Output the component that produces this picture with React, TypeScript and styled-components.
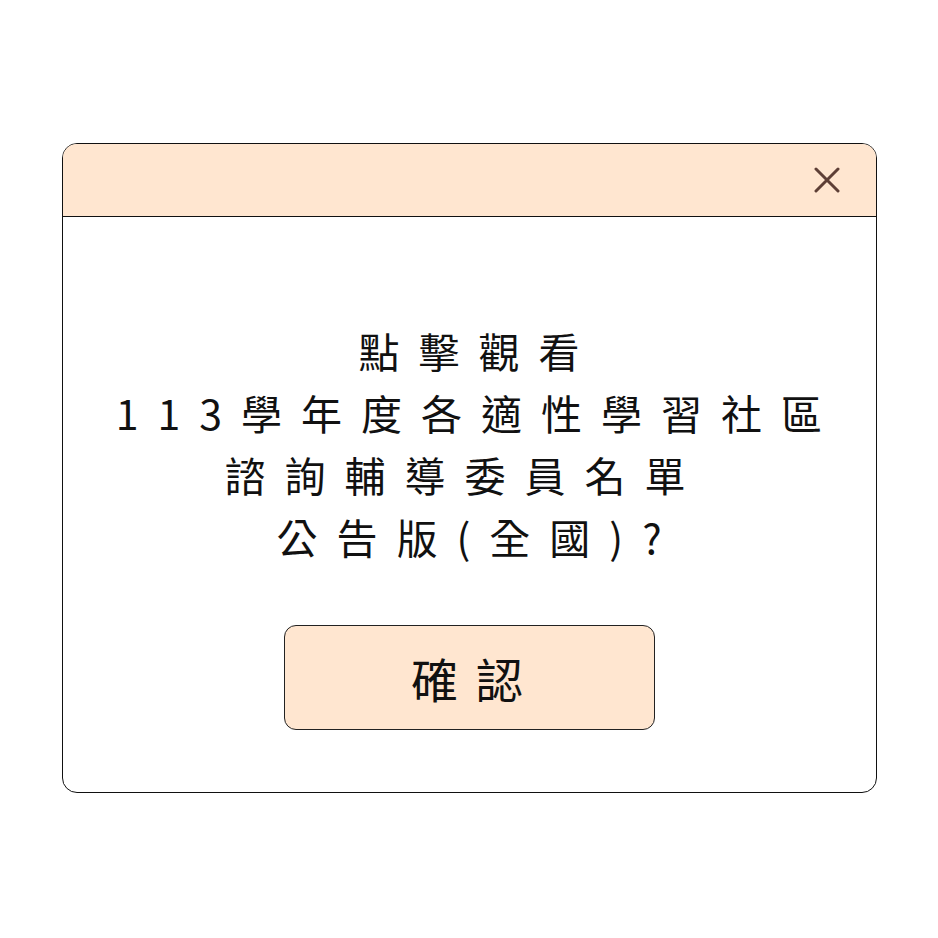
import styled, { createGlobalStyle } from 'styled-components';

const GlobalStyle = createGlobalStyle`
    html, body {
        margin: 0;
        padding: 0;
        background: #ffffff;
    }
    body {
        font-family: 'Noto Sans CJK TC', 'Noto Sans', sans-serif;
        color: #111111;
    }
`;

const StyledPage = styled.div`
    width: 938px;
    height: 938px;
    display: flex;
    align-items: flex-start;
    justify-content: center;
    padding-top: 143px;
    box-sizing: border-box;
`;

const StyledDialog = styled.div`
    width: 815px;
    height: 650px;
    box-sizing: border-box;
    border: 1.5px solid #111111;
    border-radius: 15px;
    overflow: hidden;
    display: flex;
    flex-direction: column;
    background: #ffffff;
`;

const StyledHeader = styled.div`
    height: 72px;
    flex-shrink: 0;
    background: #ffe6d0;
    border-bottom: 1.5px solid #111111;
    display: flex;
    align-items: center;
    justify-content: flex-end;
    padding-right: 34px;
`;

const CloseButton = styled.button`
    width: 30px;
    height: 30px;
    padding: 0;
    border: 0;
    background: transparent;
    cursor: pointer;
    display: flex;
    align-items: center;
    justify-content: center;
    color: #5e3f36;
`;

const StyledBody = styled.div`
    flex: 1;
    display: flex;
    flex-direction: column;
    align-items: center;
    padding-top: 102px;
    gap: 58px;
`;

const StyledMessage = styled.div`
    display: flex;
    flex-direction: column;
    align-items: center;
    width: 100%;
`;

const Line = styled.div`
    width: max-content;
    flex-shrink: 0;
    padding-left: 19px;
    font-size: 41px;
    font-weight: 400;
    line-height: 62px;
    letter-spacing: 19px;
    white-space: pre;
`;

const ConfirmButton = styled.button`
    width: 371px;
    height: 105px;
    flex-shrink: 0;
    box-sizing: border-box;
    border: 1.5px solid #222222;
    border-radius: 12px;
    background: #ffe6d0;
    cursor: pointer;
    display: flex;
    align-items: center;
    justify-content: center;
    padding: 0;
`;

const ButtonLabel = styled.span`
    display: block;
    font-family: 'Noto Sans CJK TC', 'Noto Sans', sans-serif;
    font-size: 47px;
    font-weight: 400;
    line-height: 1;
    letter-spacing: 18px;
    padding-left: 14px;
    color: #111111;
`;

const lines = ['點擊觀看', '113學年度各適性學習社區', '諮詢輔導委員名單\u00a0', '公告版(全國)?'];

const App = () => {
    return (
        <>
            <GlobalStyle />
            <StyledPage>
                <StyledDialog>
                    <StyledHeader>
                        <CloseButton aria-label='close'>
                            <svg width='26' height='26' viewBox='0 0 26 26'>
                                <path d='M2 2 L24 24 M24 2 L2 24' stroke='currentColor' strokeWidth='3' strokeLinecap='round' />
                            </svg>
                        </CloseButton>
                    </StyledHeader>
                    <StyledBody>
                        <StyledMessage>
                            {lines.map((line) => (
                                <Line key={line}>{line}</Line>
                            ))}
                        </StyledMessage>
                        <ConfirmButton>
                            <ButtonLabel>確認</ButtonLabel>
                        </ConfirmButton>
                    </StyledBody>
                </StyledDialog>
            </StyledPage>
        </>
    );
};

export default App;
